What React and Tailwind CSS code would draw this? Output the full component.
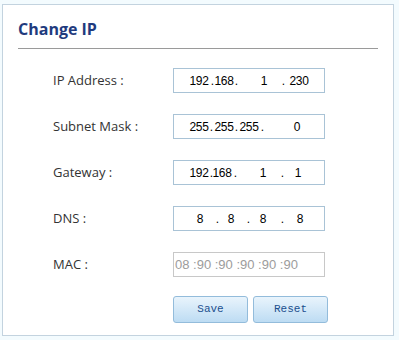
const rows = [
  {
    label: 'IP Address :',
    segs: [
      ['192', 'ml-[16px]'],
      ['.', 'ml-[2px]'],
      ['168', 'ml-[1px]'],
      ['.', 'ml-[1px]'],
      ['1', 'ml-[17px]'],
      ['.', 'ml-[8px]'],
      ['230', 'ml-[5px]'],
    ],
  },
  {
    label: 'Subnet Mask :',
    segs: [
      ['255', 'ml-[16px]'],
      ['.', 'ml-[1px]'],
      ['255', 'ml-[2px]'],
      ['.', 'ml-[1px]'],
      ['255', 'ml-[2px]'],
      ['.', 'ml-[2px]'],
      ['0', 'ml-[24px]'],
    ],
  },
  {
    label: 'Gateway :',
    segs: [
      ['192', 'ml-[16px]'],
      ['.', 'ml-[1px]'],
      ['168', 'ml-[0px]'],
      ['.', 'ml-[2px]'],
      ['1', 'ml-[17px]'],
      ['.', 'ml-[8px]'],
      ['1', 'ml-[5px]'],
    ],
  },
  {
    label: 'DNS :',
    segs: [
      ['8', 'ml-[17px]'],
      ['.', 'ml-[6px]'],
      ['8', 'ml-[3px]'],
      ['.', 'ml-[6px]'],
      ['8', 'ml-[4px]'],
      ['.', 'ml-[8px]'],
      ['8', 'ml-[7px]'],
    ],
  },
];

const digitFont = "font-['Liberation_Sans',Arial,sans-serif]";

function IpField({ segs }) {
  return (
    <div
      className={`flex h-[25px] w-[152px] shrink-0 items-center border border-[#a9c3d6] bg-white text-[12px] leading-[14px] text-black ${digitFont}`}
    >
      <div className="flex items-baseline">
        {segs.map(([text, ml], i) => (
          <span
            key={i}
            className={`flex shrink-0 justify-center ${ml} ${
              text === '.' ? 'w-[4px] pl-[1px]' : 'w-[18px] tracking-[-0.4px]'
            }`}
          >
            {text}
          </span>
        ))}
      </div>
    </div>
  );
}

function FormRow({ label, children }) {
  return (
    <div className="flex h-[25px] items-center">
      <span className="w-[155px] shrink-0 pl-[35px] text-[13px] whitespace-nowrap text-[#333]">
        {label}
      </span>
      {children}
    </div>
  );
}

export default function App() {
  return (
    <div className="h-[340px] w-[399px] bg-[#f3fbfe] pl-[2px] pt-[4px] font-['Open_Sans',sans-serif]">
      <div className="h-[332px] w-[392px] border border-[#c3d3df] bg-white px-[15px] pt-[13px]">
        <h2 className="text-[16px] font-bold leading-[22px] text-[#1f3b7e]">Change IP</h2>
        <div className="mt-[8px] h-[1px] bg-[#9a9a9a]" />

        <div className="mt-[19px] flex flex-col gap-[21px]">
          {rows.map((row) => (
            <FormRow key={row.label} label={row.label}>
              <IpField segs={row.segs} />
            </FormRow>
          ))}
          <FormRow label="MAC :">
            <div
              className={`flex h-[25px] w-[152px] shrink-0 items-center border border-[#c8c8c8] bg-white pl-[1px] text-[13px] whitespace-nowrap text-[#9c9c9c] ${digitFont}`}
            >
              08 :90 :90 :90 :90 :90
            </div>
          </FormRow>
        </div>

        <div className="mt-[19px] flex gap-[5px] pl-[155px]">
          <button className="h-[27px] w-[75px] rounded-[3px] border border-[#93bcdb] bg-gradient-to-b from-[#e9f4fc] to-[#bddcf3] font-['Liberation_Mono',monospace] text-[11px] text-[#1c4f8e]">
            Save
          </button>
          <button className="h-[27px] w-[75px] rounded-[3px] border border-[#93bcdb] bg-gradient-to-b from-[#e9f4fc] to-[#bddcf3] font-['Liberation_Mono',monospace] text-[11px] text-[#1c4f8e]">
            Reset
          </button>
        </div>
      </div>
    </div>
  );
}
